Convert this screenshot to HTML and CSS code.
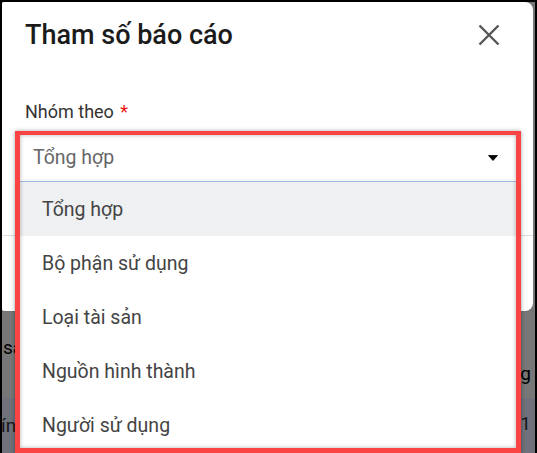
FILE: index.html
```html
<!DOCTYPE html>
<html lang="vi">
<head>
<meta charset="utf-8">
<title>Tham số báo cáo</title>
<link rel="stylesheet" href="styles.css">
</head>
<body>
<div class="screen">
  <div class="page">
    <div class="page-top"></div>
    <div class="trow thead">
      <span class="cell-l">sản</span>
      <span class="cell-r">Số lượng</span>
    </div>
    <div class="trow tbody">
      <span class="cell-l">ín</span>
      <span class="cell-r">1</span>
    </div>
  </div>
  <div class="overlay"></div>
  <div class="modal">
    <div class="modal-header">
      <h2 class="modal-title">Tham số báo cáo</h2>
      <button class="close" aria-label="Đóng">
        <svg width="22" height="22" viewBox="0 0 22 22"><path d="M1.5 1.5 L20.5 20.5 M20.5 1.5 L1.5 20.5" stroke="#555" stroke-width="2.4" fill="none"/></svg>
      </button>
    </div>
    <div class="modal-body">
      <label class="field-label">Nhóm theo <span class="req">*</span></label>
      <div class="select-wrap">
        <div class="select">
          <span class="select-value">Tổng hợp</span>
          <svg class="caret" width="10" height="6" viewBox="0 0 10 6"><path d="M0.5 0.5 H9.5 L5 5.5 Z" fill="#000" stroke="#000" stroke-width="0.8" stroke-linejoin="round"/></svg>
        </div>
        <ul class="menu">
          <li class="menu-item selected">Tổng hợp</li>
          <li class="menu-item">Bộ phận sử dụng</li>
          <li class="menu-item">Loại tài sản</li>
          <li class="menu-item">Nguồn hình thành</li>
          <li class="menu-item">Người sử dụng</li>
        </ul>
      </div>
    </div>
    <div class="modal-footer"></div>
  </div>
  <div class="annot"></div>
</div>
</body>
</html>
```
FILE: styles.css
```css
* { box-sizing: border-box; }
html, body { margin: 0; padding: 0; }
body {
  background: #000;
  font-family: Roboto, "Noto Sans", Arial, sans-serif;
  width: 537px;
  height: 453px;
  overflow: hidden;
}
.screen {
  position: relative;
  margin: 2px 2px 0 2px;
  width: 533px;
  height: 451px;
  overflow: hidden;
}
.page {
  display: flex;
  flex-direction: column;
  height: 100%;
}
.page-top { height: 309px; background: #eeeeee; flex: none; }
.trow {
  display: flex;
  justify-content: space-between;
  font-size: 19px;
  line-height: 22px;
  flex: none;
}
.thead {
  height: 87px;
  background: #eeeeee;
  color: #000;
  border-top: 1px solid #e4e4e4;
}
.thead .cell-l { margin-top: 25px; padding-left: 1px; }
.thead .cell-r { margin-top: 51px; padding-right: 4px; }
.tbody {
  height: 55px;
  background: #dee2f6;
  color: #333;
  align-items: center;
}
.tbody .cell-l { margin-left: -1px; }
.tbody .cell-r { padding-right: 4px; margin-top: -3px; }
.overlay {
  position: absolute;
  inset: 0;
  background: rgba(0, 0, 0, 0.5);
}
.modal {
  position: absolute;
  top: 0;
  left: 0;
  width: 531px;
  height: 309px;
  background: #fff;
  border-radius: 2px 8px 8px 2px;
  display: flex;
  flex-direction: column;
}
.modal-header {
  display: flex;
  align-items: center;
  justify-content: space-between;
  padding: 17px 33px 0 23px;
  flex: none;
}
.modal-title {
  margin: 0;
  font-size: 27px;
  line-height: 32px;
  font-weight: 500;
  color: #1b1b1b;
}
.close {
  border: 0;
  background: none;
  padding: 0;
  width: 22px;
  height: 22px;
  display: block;
}
.close svg { display: block; }
.modal-body {
  flex: 1;
  padding: 49px 17px 0 18px;
  border-bottom: 1px solid #dedede;
}
.field-label {
  display: block;
  padding-left: 5px;
  font-size: 18px;
  line-height: 24px;
  color: #333;
}
.req { color: #e8170f; margin-left: 2px; }
.select-wrap {
  position: relative;
  margin-top: 9px;
}
.select {
  height: 49px;
  display: flex;
  align-items: center;
  justify-content: space-between;
  padding: 0 18px 0 13px;
  border-bottom: 1px solid #a9c6f4;
  background: #fff;
}
.select-value {
  font-size: 19.5px;
  color: #666;
}
.caret { display: block; margin-top: 1px; }
.menu {
  position: absolute;
  top: 100%;
  left: 0;
  right: 0;
  margin: 0;
  padding: 0;
  list-style: none;
  background: #fff;
  box-shadow: 0 3px 8px rgba(0, 0, 0, 0.3);
  z-index: 2;
}
.menu-item {
  height: 54px;
  display: flex;
  align-items: center;
  padding-left: 22px;
  font-size: 19.5px;
  color: #444;
}
.menu-item.selected { background: #eff0f2; }
.modal-footer { height: 75px; flex: none; }
.annot {
  position: absolute;
  left: 13px;
  top: 129px;
  width: 506px;
  height: 322px;
  border: 5px solid #fa4343;
  border-top-width: 4px;
  box-shadow: 0 0 4px rgba(0, 0, 0, 0.35), inset 0 0 4px rgba(0, 0, 0, 0.3);
  z-index: 3;
}
```
